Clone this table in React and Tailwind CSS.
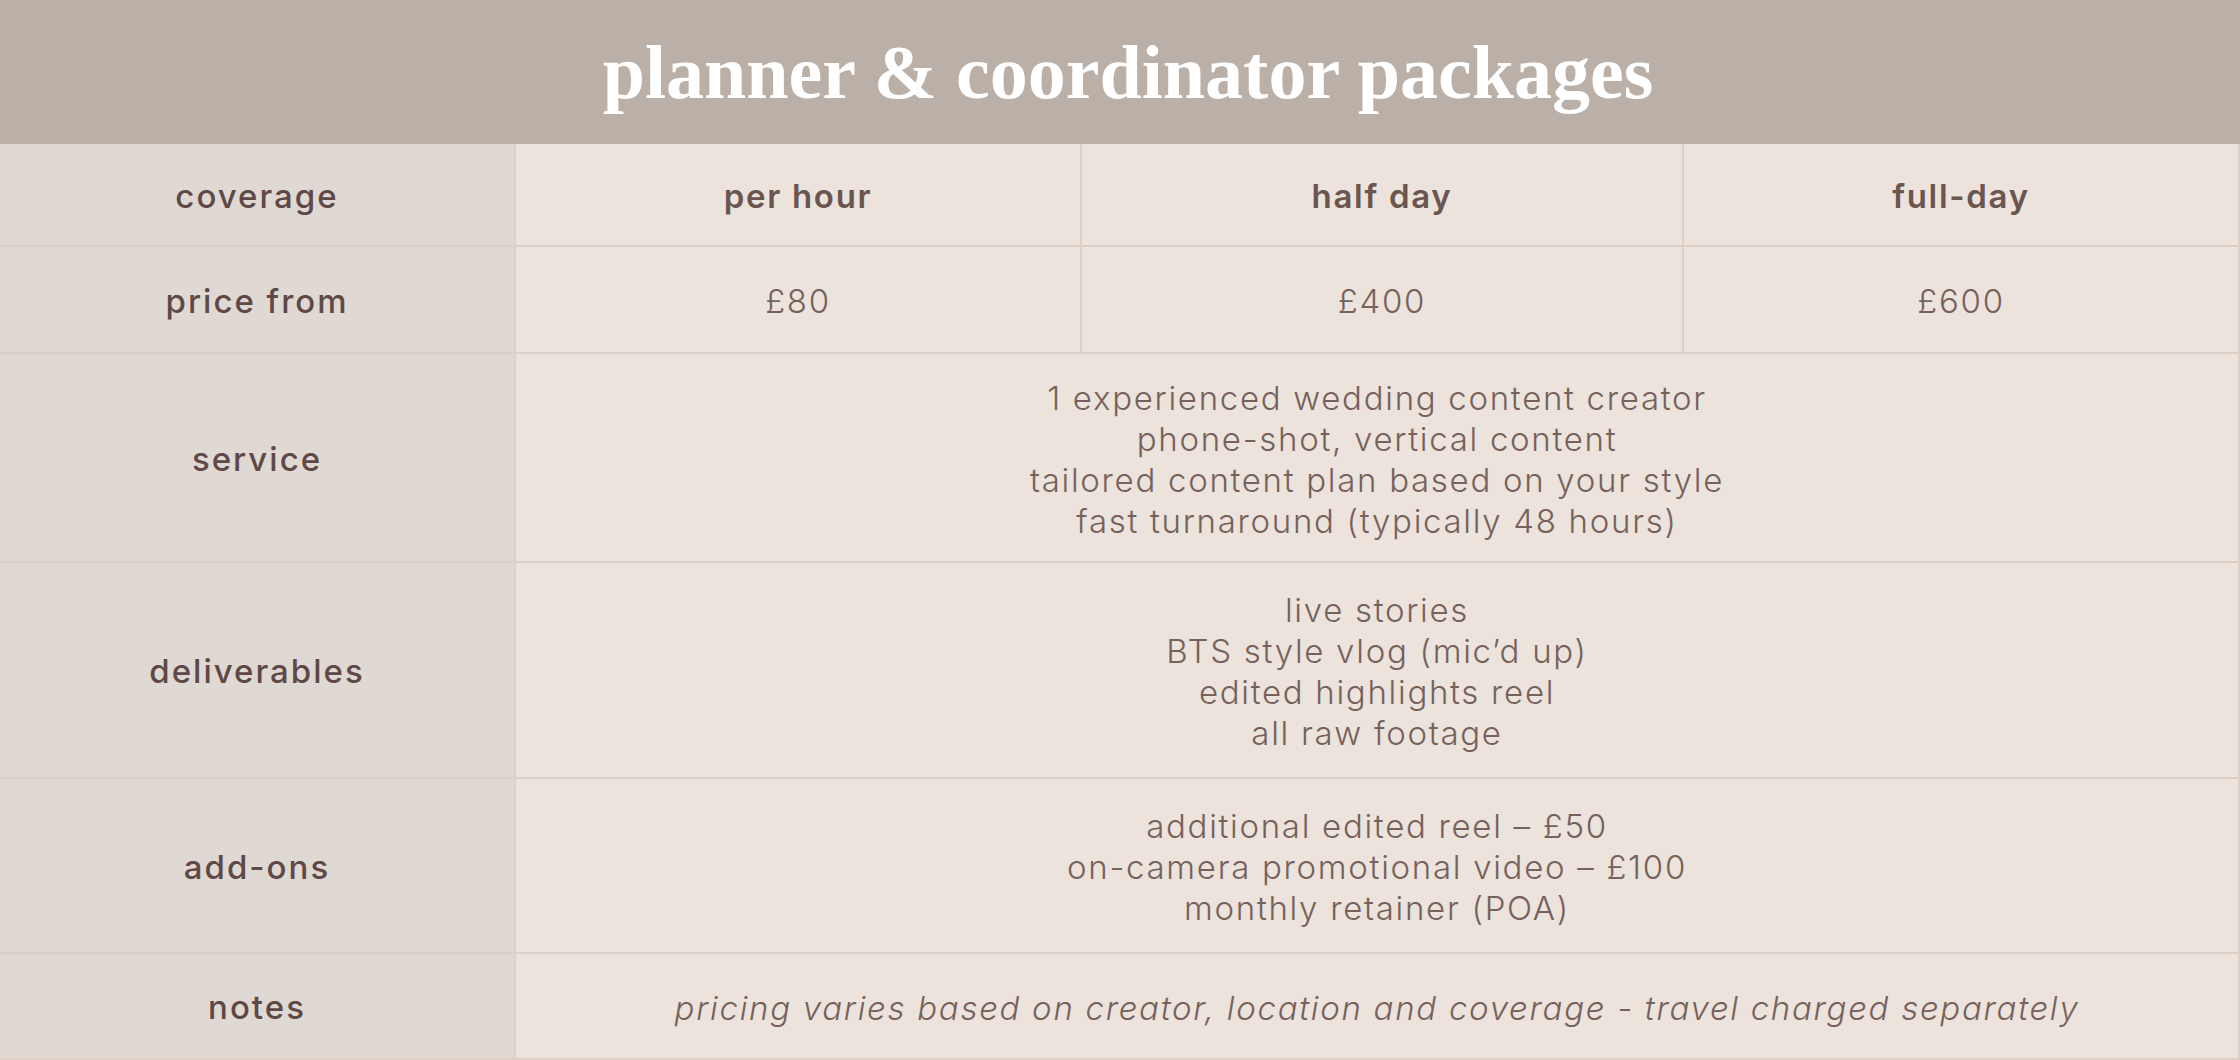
import React from "react";

const label = "flex items-center justify-center pt-1 bg-[#e0d8d2] border-r-2 border-b-2 border-[#dbcfc6] text-[#5e4946] font-medium text-[33px] tracking-[2px]";
const cell = "flex items-center justify-center text-center pt-1 border-r-2 border-b-2 border-[#dbcfc6] text-[#76615b] font-light text-[33px] tracking-[1.7px] leading-[41px]";
const head = "flex items-center justify-center pt-1 border-r-2 border-b-2 border-[#dbcfc6] text-[#6b554f] font-semibold text-[33px] tracking-[1.7px]";

const rows = [
  {
    name: "service",
    lines: [
      "1 experienced wedding content creator",
      "phone-shot, vertical content",
      "tailored content plan based on your style",
      "fast turnaround (typically 48 hours)",
    ],
  },
  {
    name: "deliverables",
    lines: ["live stories", "BTS style vlog (mic’d up)", "edited highlights reel", "all raw footage"],
  },
  {
    name: "add-ons",
    lines: [
      "additional edited reel – £50",
      "on-camera promotional video – £100",
      "monthly retainer (POA)",
    ],
  },
];

export default function App() {
  return (
    <div className="w-[2240px] h-[1060px] bg-[#ebe3dc] overflow-hidden" style={{ fontFamily: "Inter, 'Open Sans', sans-serif" }}>
      {/* title bar */}
      <div className="h-[144px] bg-[#bab0a7] flex items-center justify-center">
        <h1
          className="text-white font-bold text-[76px] leading-none pl-4"
          style={{ fontFamily: "'Liberation Serif', 'DejaVu Serif', serif" }}
        >
          planner &amp; coordinator packages
        </h1>
      </div>

      {/* table */}
      <div className="grid grid-cols-[516px_566px_602px_556px] grid-rows-[103px_107px_209px_216px_175px_106px]">
        <div className={label}>coverage</div>
        <div className={head}>per hour</div>
        <div className={head}>half day</div>
        <div className={head}>full-day</div>

        <div className={label}>price from</div>
        <div className={cell}>£80</div>
        <div className={cell}>£400</div>
        <div className={cell}>£600</div>

        {rows.map((r) => (
          <React.Fragment key={r.name}>
            <div className={label}>{r.name}</div>
            <div className={cell + " col-span-3 flex-col"}>
              {r.lines.map((l) => (
                <span key={l}>{l}</span>
              ))}
            </div>
          </React.Fragment>
        ))}

        <div className={label + " border-b-0"}>notes</div>
        <div className={cell + " col-span-3 italic border-b-0"}>
          pricing varies based on creator, location and coverage - travel charged separately
        </div>
      </div>
    </div>
  );
}
